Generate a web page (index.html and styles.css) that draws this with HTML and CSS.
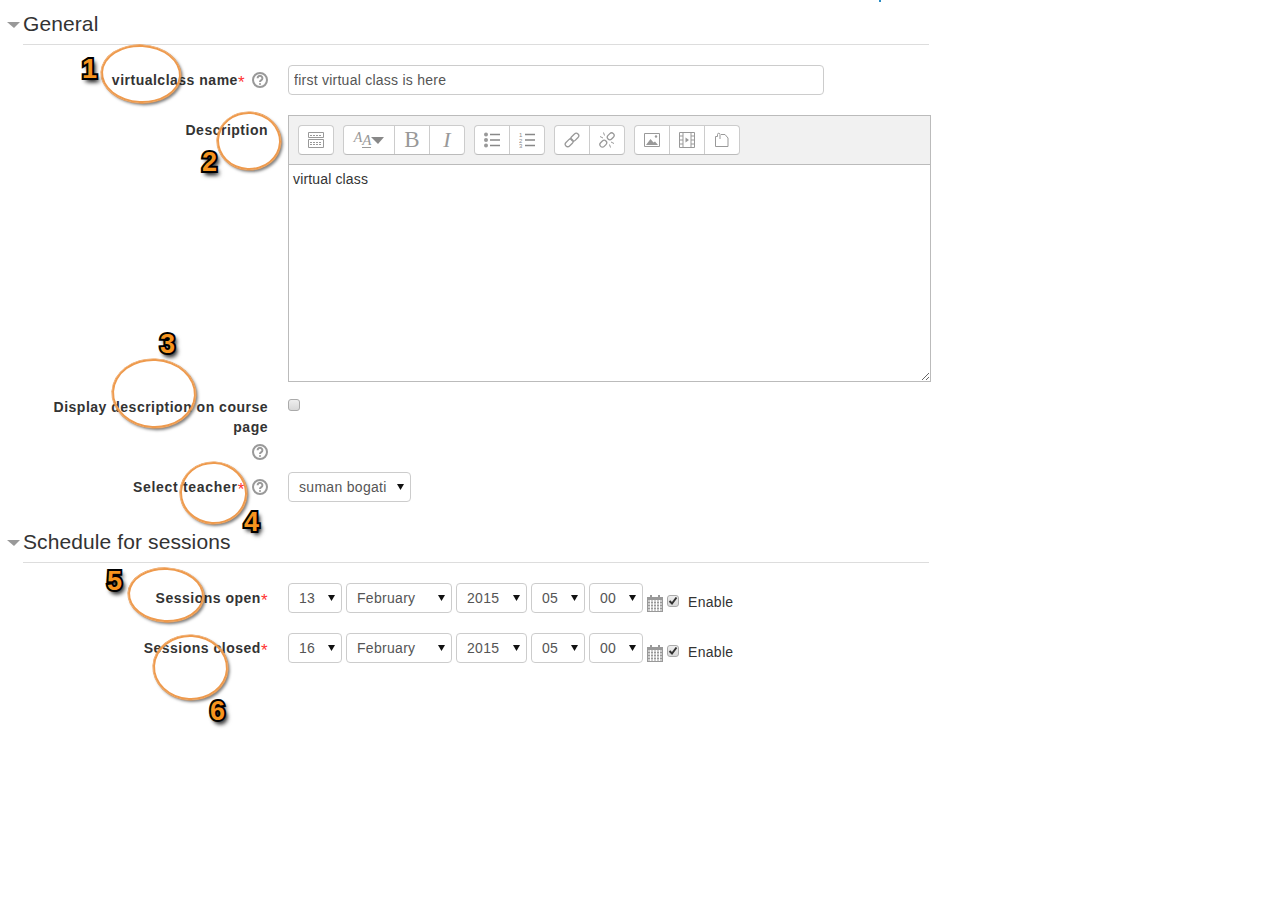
FILE: index.html
```html
<!DOCTYPE html>
<html lang="en">
<head>
    <meta charset="UTF-8">
    <title>Virtual class settings</title>
    <link rel="stylesheet" href="styles.css">
</head>
<body>
    <span class="top-link"></span>
    <form class="settings">
        <!-- General -->
        <div class="section-head">
            <span class="arrow"></span>
            <h2 class="section-title">General</h2>
        </div>
        <div class="row row-name">
            <div class="label">virtualclass name<span class="req">*</span><svg class="help" viewBox="0 0 16 16"><circle cx="8" cy="8" r="7"/><path d="M5.600 6.200a2.400 2.400 0 1 1 3.700 2c-.9.6-1.300 1-1.300 1.900"/><path d="M8 11.200v1.600"/></svg></div>
            <div class="control"><input class="text-input" type="text" value="first virtual class is here"></div>
        </div>
        <div class="row row-desc">
            <div class="label">Description</div>
            <div class="control">
                <div class="editor-bar">
                    <div class="btn-group">
                        <span class="btn"><svg viewBox="0 0 16 16"><path d="M.5.5h15v5H.5zM.5 7.500h15v8H.5z"/><path d="M2 3.500h2M5 3.500h2M8 3.500h2M11 3.500h2M2 10.500h2M5 10.500h2M8 10.500h2M11 10.500h2M2 12.500h2M5 12.500h2M8 12.500h2M11 12.500h2"/></svg></span>
                    </div>
                    <div class="btn-group">
                        <span class="btn btn-font"><span class="font-a">A</span><span class="font-b">A</span><span class="font-arrow"></span></span>
                        <span class="btn btn-b">B</span>
                        <span class="btn btn-i">I</span>
                    </div>
                    <div class="btn-group">
                        <span class="btn"><svg viewBox="0 0 16 16"><circle class="fill" cx="2" cy="2.500" r="2"/><circle class="fill" cx="2" cy="8" r="2"/><circle class="fill" cx="2" cy="13.500" r="2"/><path class="thick" d="M6 2.500h10M6 8h10M6 13.500h10"/></svg></span>
                        <span class="btn"><svg viewBox="0 0 16 16"><text x="0" y="5">1</text><text x="0" y="10.500">2</text><text x="0" y="16">3</text><path class="thick" d="M6 2.500h10M6 8h10M6 13.500h10"/></svg></span>
                    </div>
                    <div class="btn-group">
                        <span class="btn"><svg viewBox="0 0 16 16"><g class="chain" transform="rotate(-45 8 8)"><rect x="-.5" y="5.500" width="9" height="5" rx="2.500"/><rect x="7.500" y="5.500" width="9" height="5" rx="2.500"/></g></svg></span>
                        <span class="btn"><svg viewBox="0 0 16 16"><g class="chain" transform="rotate(-45 8 8)"><rect x="-1" y="5.500" width="7.500" height="5" rx="2.500"/><rect x="9.500" y="5.500" width="7.500" height="5" rx="2.500"/></g><path d="M1 4.500l3 1.500M4.500 .5l1 3M15 11.500l-3-1.500M11.500 15.500l-1-3"/></svg></span>
                    </div>
                    <div class="btn-group">
                        <span class="btn"><svg viewBox="0 0 16 16"><path d="M.5 1.500h15v13H.5z"/><path class="fill" d="M2 13l4.500-6 3 3.500 1.500-1 3 3.500z"/><circle class="fill" cx="12" cy="4.500" r="1.200"/></svg></span>
                        <span class="btn"><svg viewBox="0 0 16 16"><path d="M.5 .5h15v15H.5zM4 .5v15M12 .5v15M.5 4H4M.5 8H4M.5 12H4M12 4h3.500M12 8h3.500M12 12h3.500"/><path class="fill" d="M6.500 5.500v5L10 8z"/></svg></span>
                        <span class="btn"><svg viewBox="0 0 16 16"><path d="M3.500 4.500H1.500v10h12.500V6l-3-3.500H7"/><path d="M3.500 4.500V2.500a1.250 1.250 0 0 1 2.500 0V7"/></svg></span>
                    </div>
                </div>
                <textarea class="editor-text">virtual class</textarea>
            </div>
        </div>
        <div class="row row-display">
            <div class="label">Display description on course page <svg class="help" viewBox="0 0 16 16"><circle cx="8" cy="8" r="7"/><path d="M5.600 6.200a2.400 2.400 0 1 1 3.700 2c-.9.6-1.300 1-1.300 1.900"/><path d="M8 11.200v1.600"/></svg></div>
            <div class="control"><input class="check check-display" type="checkbox"></div>
        </div>
        <div class="row row-teacher">
            <div class="label">Select teacher<span class="req">*</span><svg class="help" viewBox="0 0 16 16"><circle cx="8" cy="8" r="7"/><path d="M5.600 6.200a2.400 2.400 0 1 1 3.700 2c-.9.6-1.300 1-1.300 1.900"/><path d="M8 11.200v1.600"/></svg></div>
            <div class="control"><select class="sel sel-teacher"><option>suman bogati</option></select></div>
        </div>

        <!-- Schedule -->
        <div class="section-head section-second">
            <span class="arrow"></span>
            <h2 class="section-title">Schedule for sessions</h2>
        </div>
        <div class="row row-date">
            <div class="label">Sessions open<span class="req">*</span></div>
            <div class="control date-line">
                <select class="sel sel-small"><option>13</option></select>
                <select class="sel sel-month"><option>February</option></select>
                <select class="sel sel-year"><option>2015</option></select>
                <select class="sel sel-small"><option>05</option></select>
                <select class="sel sel-small"><option>00</option></select>
                <svg class="cal" viewBox="0 0 16 17"><path d="M0 2h3V0h2v2h6V0h2v2h3v15H0z"/><path class="cal-grid" d="M1 6h14M1 9h14M1 12h14M1 15h14M3.500 5v11M6.500 5v11M9.500 5v11M12.500 5v11"/></svg>
                <input class="check" type="checkbox" checked>
                <span class="enable">Enable</span>
            </div>
        </div>
        <div class="row row-date">
            <div class="label">Sessions closed<span class="req">*</span></div>
            <div class="control date-line">
                <select class="sel sel-small"><option>16</option></select>
                <select class="sel sel-month"><option>February</option></select>
                <select class="sel sel-year"><option>2015</option></select>
                <select class="sel sel-small"><option>05</option></select>
                <select class="sel sel-small"><option>00</option></select>
                <svg class="cal" viewBox="0 0 16 17"><path d="M0 2h3V0h2v2h6V0h2v2h3v15H0z"/><path class="cal-grid" d="M1 6h14M1 9h14M1 12h14M1 15h14M3.500 5v11M6.500 5v11M9.500 5v11M12.500 5v11"/></svg>
                <input class="check" type="checkbox" checked>
                <span class="enable">Enable</span>
            </div>
        </div>
    </form>

    <!-- Annotations drawn over the form -->
    <span class="ring ring-1"></span>
    <span class="ring ring-2"></span>
    <span class="ring ring-3"></span>
    <span class="ring ring-4"></span>
    <span class="ring ring-5"></span>
    <span class="ring ring-6"></span>
    <span class="num num-1">1</span>
    <span class="num num-2">2</span>
    <span class="num num-3">3</span>
    <span class="num num-4">4</span>
    <span class="num num-5">5</span>
    <span class="num num-6">6</span>
</body>
</html>
```

FILE: styles.css
```css
/* General styles */
html, body {
    height: 100%;
}

body {
    margin: 0;
    position: relative;
    overflow: hidden;
    background: #fff;
    color: #333;
    font-family: "Liberation Sans", Arial, sans-serif;
    font-size: 14px;
    line-height: 20px;
    letter-spacing: 0.3px;
}

.top-link {
    position: absolute;
    left: 879px;
    top: 0;
    width: 2px;
    height: 2px;
    background: #2a8cc4;
}

/* Section headers */
.section-head {
    display: flex;
    gap: 3px;
    width: 922px;
    padding-left: 7px;
    margin-bottom: 20px;
}

.section-second {
    margin-top: 16px;
}

.arrow {
    flex: none;
    width: 0;
    height: 0;
    margin-top: 22px;
    border-left: 7px solid transparent;
    border-right: 6px solid transparent;
    border-top: 6px solid #999;
}

.section-title {
    flex: 1;
    margin: 0;
    padding: 10px 0 6px;
    border-bottom: 1px solid #ddd;
    font-size: 21px;
    font-weight: normal;
    line-height: 28px;
    letter-spacing: 0.1px;
}

/* Form rows */
.row {
    display: grid;
    grid-template-columns: 245px 643px;
    column-gap: 20px;
    margin-left: 23px;
    width: 908px;
}

.row-name, .row-date {
    margin-bottom: 20px;
}

.row-desc {
    margin-bottom: 10px;
}

.row-display {
    height: 80px;
}

.label {
    padding-top: 5px;
    text-align: right;
    font-weight: bold;
    letter-spacing: 0.5px;
}

.row-teacher .label {
    letter-spacing: 0.7px;
}

.req {
    color: #f33;
    font-weight: normal;
    font-size: 17px;
    line-height: 14px;
    vertical-align: -3px;
}

.help {
    display: inline-block;
    width: 16px;
    height: 16px;
    margin-left: 7px;
    vertical-align: -3px;
    fill: none;
    stroke: #999;
    stroke-width: 2;
}

.row-display .help {
    display: block;
    margin: 7px 0 0 auto;
}

/* Inputs */
.text-input {
    box-sizing: border-box;
    display: block;
    width: 536px;
    height: 30px;
    padding: 0 5px;
    border: 1px solid #ccc;
    border-radius: 4px;
    color: #555;
    font: inherit;
    letter-spacing: 0.25px;
}

.sel {
    appearance: none;
    box-sizing: border-box;
    height: 30px;
    padding: 0 0 0 10px;
    border: 1px solid #ccc;
    border-radius: 4px;
    background: #fff url("data:image/svg+xml,%3Csvg xmlns='http://www.w3.org/2000/svg' width='7' height='6'%3E%3Cpath d='M0 0h7L3.500 6z' fill='%23111'/%3E%3C/svg%3E") no-repeat right 6px top 11px;
    color: #555;
    font: inherit;
    letter-spacing: inherit;
}

.sel-teacher {
    width: 123px;
}

.sel-small {
    width: 54px;
}

.sel-month {
    width: 106px;
}

.sel-year {
    width: 71px;
}

.check {
    appearance: none;
    box-sizing: border-box;
    width: 12px;
    height: 12px;
    margin: 0;
    border: 1px solid #aaa;
    border-radius: 3px;
    background: linear-gradient(#eee, #d8d8d8);
}

.check:checked {
    background: url("data:image/svg+xml,%3Csvg xmlns='http://www.w3.org/2000/svg' width='10' height='10'%3E%3Cpath d='M1.500 5l2.500 2.500L8.500 1.500' fill='none' stroke='%23333' stroke-width='2'/%3E%3C/svg%3E") no-repeat center, linear-gradient(#eee, #d8d8d8);
}

.check-display {
    display: block;
    margin-top: 7px;
}

.date-line {
    display: flex;
    align-items: flex-start;
    gap: 4px;
}

.cal {
    width: 16px;
    height: 17px;
    margin-top: 12px;
    fill: #999;
}

.cal-grid {
    fill: none;
    stroke: #fff;
    stroke-width: 1;
}

.date-line .check {
    margin-top: 12px;
}

.enable {
    margin: 9px 0 0 5px;
}

/* Editor */
.editor-bar {
    display: flex;
    gap: 9px;
    box-sizing: border-box;
    height: 50px;
    padding: 9px;
    border: 1px solid #bbb;
    background: #f1f1f1;
}

.btn-group {
    display: flex;
    height: 30px;
    box-sizing: border-box;
    border: 1px solid #ccc;
    border-bottom-color: #bbb;
    border-radius: 4px;
    background: #fff;
}

.btn {
    position: relative;
    display: flex;
    align-items: center;
    justify-content: center;
    width: 34px;
    color: #999;
    font-family: "Liberation Serif", serif;
    letter-spacing: 0;
}

.btn + .btn {
    border-left: 1px solid #ccc;
}

.btn svg {
    width: 16px;
    height: 16px;
    fill: none;
    stroke: #999;
    stroke-width: 1;
}

.btn svg .fill {
    fill: #999;
    stroke: none;
}

.btn svg .thick {
    stroke: #888;
    stroke-width: 1.5;
}

.btn svg .chain {
    stroke-width: 1.3;
}

.btn svg text {
    fill: #888;
    stroke: none;
    font-family: "Liberation Sans", sans-serif;
    font-size: 6px;
}

.btn-font {
    width: 50px;
    font-style: italic;
}

.font-a {
    position: relative;
    top: -2px;
    font-size: 14px;
}

.font-b {
    position: relative;
    top: 1px;
    border-bottom: 1px solid #999;
    font-size: 15px;
    line-height: 13px;
}

.font-arrow {
    flex: none;
    width: 0;
    height: 0;
    border-left: 7px solid transparent;
    border-right: 6px solid transparent;
    border-top: 7px solid #888;
}

.btn-b {
    font-size: 23px;
    font-weight: normal;
}

.btn-i {
    font-size: 22px;
    font-style: italic;
}

.editor-text {
    box-sizing: border-box;
    display: block;
    width: 643px;
    height: 218px;
    margin: -1px 0 0;
    padding: 4px;
    border: 1px solid #bbb;
    border-radius: 0;
    outline: none;
    color: #333;
    font: inherit;
    letter-spacing: 0.15px;
}

/* Annotations */
.ring {
    position: absolute;
    box-sizing: border-box;
    border: 2px solid #ee9a4d;
    border-radius: 50%;
    box-shadow: 0 0 0 0.6px #ee9a4d, 2px 2px 3px rgba(0, 0, 0, 0.5);
    transform: rotate(3deg);
}

.ring-1 { left: 101px; top: 45px; width: 80px; height: 58px; }
.ring-2 { left: 217px; top: 112px; width: 64px; height: 58px; }
.ring-3 { left: 112px; top: 359px; width: 84px; height: 69px; }
.ring-4 { left: 180px; top: 462px; width: 67px; height: 62px; }
.ring-5 { left: 128px; top: 568px; width: 76px; height: 54px; }
.ring-6 { left: 153px; top: 635px; width: 75px; height: 65px; }

.num {
    position: absolute;
    color: #f7941e;
    font-size: 27px;
    font-weight: bold;
    line-height: 30px;
    letter-spacing: 0;
    -webkit-text-stroke: 4px #000;
    paint-order: stroke fill;
    text-shadow: 2px 3px 4px #000, 3px 4px 5px rgba(0, 0, 0, 0.6);
}

.num-1 { left: 82px; top: 54px; }
.num-2 { left: 202px; top: 147px; }
.num-3 { left: 160px; top: 329px; }
.num-4 { left: 244px; top: 507px; }
.num-5 { left: 107px; top: 566px; }
.num-6 { left: 210px; top: 696px; }
```
